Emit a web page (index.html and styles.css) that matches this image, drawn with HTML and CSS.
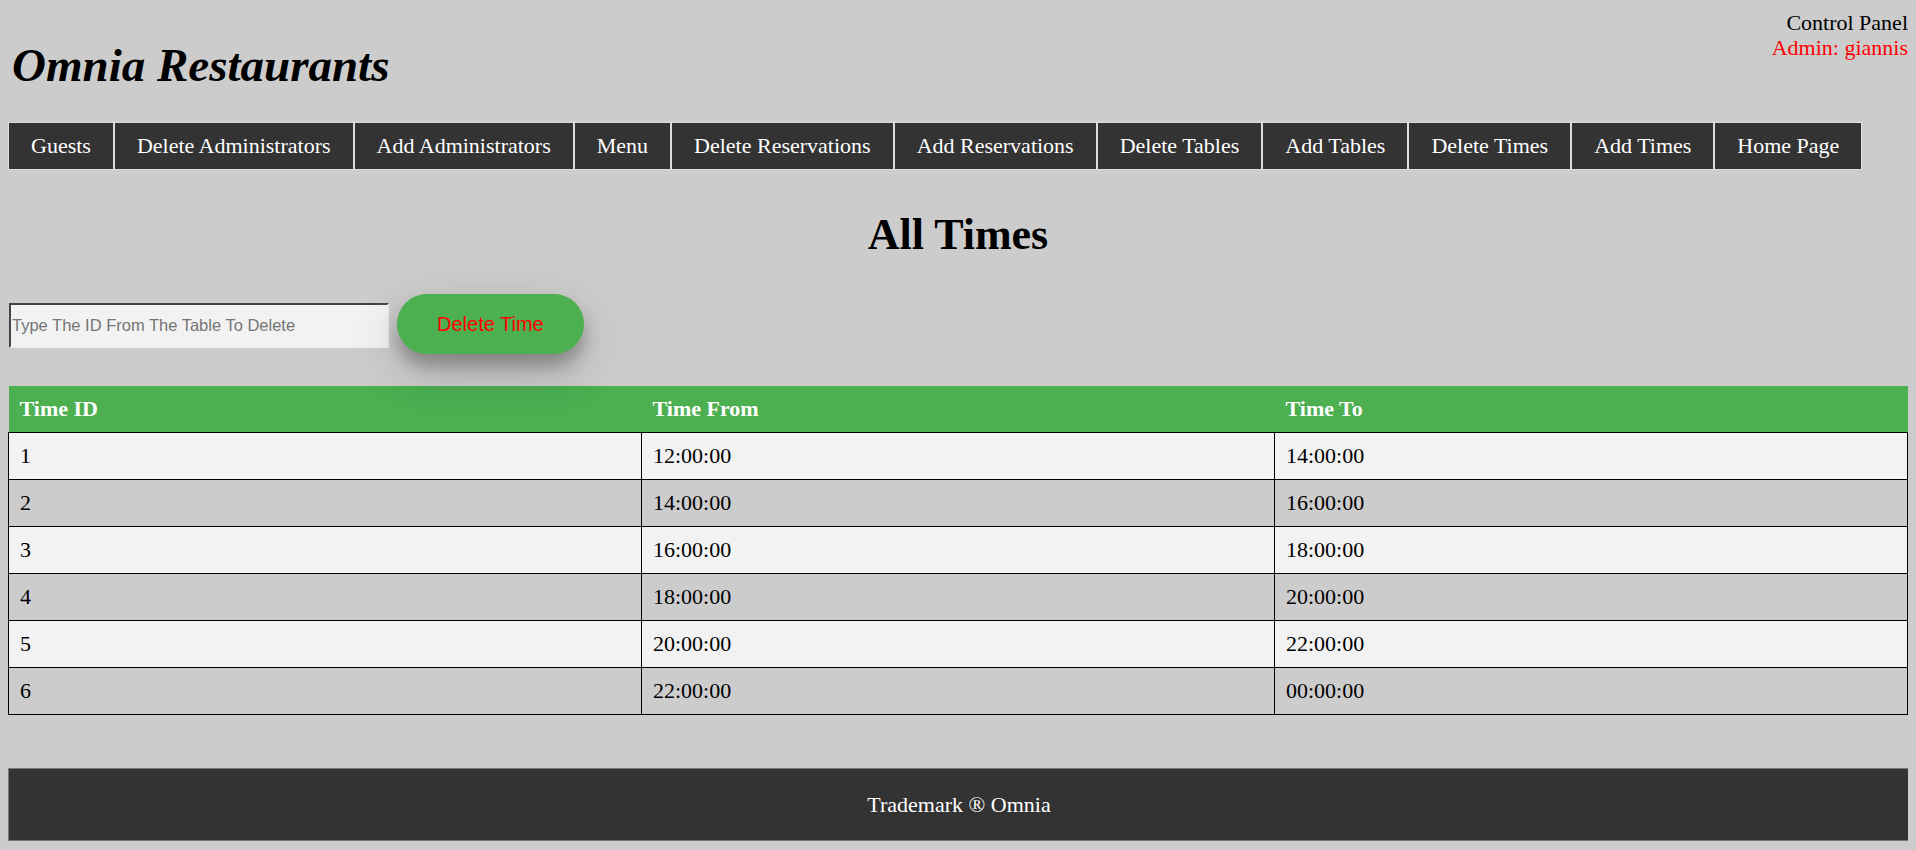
FILE: index.html
```html
<!DOCTYPE html>
<html lang="en">
<head>
<meta charset="utf-8">
<title>Omnia Restaurants - All Times</title>
<link rel="stylesheet" href="styles.css">
</head>
<body>
<header class="top">
  <h2 class="brand">Omnia Restaurants</h2>
  <div class="account">
    <div class="account-title">Control Panel</div>
    <div class="account-user">Admin: giannis</div>
  </div>
</header>
<nav class="menu">
  <a class="menu-item" href="#">Guests</a>
  <a class="menu-item" href="#">Delete Administrators</a>
  <a class="menu-item" href="#">Add Administrators</a>
  <a class="menu-item" href="#">Menu</a>
  <a class="menu-item" href="#">Delete Reservations</a>
  <a class="menu-item" href="#">Add Reservations</a>
  <a class="menu-item" href="#">Delete Tables</a>
  <a class="menu-item" href="#">Add Tables</a>
  <a class="menu-item" href="#">Delete Times</a>
  <a class="menu-item" href="#">Add Times</a>
  <a class="menu-item" href="#">Home Page</a>
</nav>
<h1 class="page-title">All Times</h1>
<form class="controls">
  <input class="id-input" type="text" placeholder="Type The ID From The Table To Delete">
  <button class="delete-btn" type="button">Delete Time</button>
</form>
<table class="times">
  <thead>
    <tr><th>Time ID</th><th>Time From</th><th>Time To</th></tr>
  </thead>
  <tbody>
    <tr><td>1</td><td>12:00:00</td><td>14:00:00</td></tr>
    <tr><td>2</td><td>14:00:00</td><td>16:00:00</td></tr>
    <tr><td>3</td><td>16:00:00</td><td>18:00:00</td></tr>
    <tr><td>4</td><td>18:00:00</td><td>20:00:00</td></tr>
    <tr><td>5</td><td>20:00:00</td><td>22:00:00</td></tr>
    <tr><td>6</td><td>22:00:00</td><td>00:00:00</td></tr>
  </tbody>
</table>
<footer class="footer">Trademark &reg; Omnia</footer>
</body>
</html>
```

FILE: styles.css
```css
html, body {
  background: #cccccc;
}
body {
  margin: 8px;
  font-family: "Liberation Serif", "Times New Roman", serif;
  font-size: 22px;
  color: #000;
}
.top {
  display: flex;
  justify-content: space-between;
  align-items: flex-start;
}
.brand {
  margin: 31px 0 0 4px;
  font-size: 47px;
  line-height: 53px;
  font-weight: bold;
  font-style: italic;
}
.account {
  margin-top: 2px;
  text-align: right;
  line-height: 25px;
}
.account-user {
  color: #ff0000;
}
.menu {
  display: flex;
  margin-top: 30px;
}
.menu-item {
  display: block;
  background: #333333;
  color: #ffffff;
  text-decoration: none;
  border: 1px solid #dddddd;
  padding: 11px 22px;
  line-height: 24px;
}
.page-title {
  margin: 41px 0 0;
  text-align: center;
  font-size: 44px;
  line-height: 48px;
  font-weight: bold;
}
.controls {
  display: flex;
  align-items: center;
  gap: 8px;
  margin: 35px 0 0;
}
.id-input {
  box-sizing: border-box;
  width: 380px;
  height: 45px;
  margin: 3px 0 0 1px;
  padding: 1px;
  border-width: 2px;
  border-style: inset;
  border-color: #999999 #eeeeee #eeeeee #999999;
  background: #f2f2f2;
  font-family: "Liberation Sans", Arial, sans-serif;
  font-size: 16.5px;
  color: #333;
}
.id-input::placeholder {
  color: #757575;
}
.delete-btn {
  background: #4caf50;
  color: #ff0000;
  border: none;
  border-radius: 30px;
  padding: 18px 40px;
  line-height: 24px;
  font-family: "Liberation Sans", Arial, sans-serif;
  font-size: 20px;
  box-shadow: 0 12px 16px 0 rgba(0, 0, 0, 0.24), 0 17px 50px 0 rgba(0, 0, 0, 0.19);
}
.times {
  width: 100%;
  margin-top: 32px;
  border-collapse: collapse;
}
.times th {
  width: 33.33%;
  background: #4caf50;
  color: #ffffff;
  text-align: left;
  font-weight: bold;
  padding: 10px 11px;
  line-height: 26px;
}
.times td {
  border: 1px solid #000000;
  padding: 10px 11px;
  line-height: 26px;
}
.times tbody tr:nth-child(odd) {
  background: #f2f2f2;
}
.times tbody tr:nth-child(even) {
  background: #cccccc;
}
.footer {
  margin-top: 53px;
  width: 100%;
  background: #333333;
  color: #ffffff;
  border: 1px solid #777777;
  text-align: center;
  padding: 22px 0;
  line-height: 27px;
}
```
